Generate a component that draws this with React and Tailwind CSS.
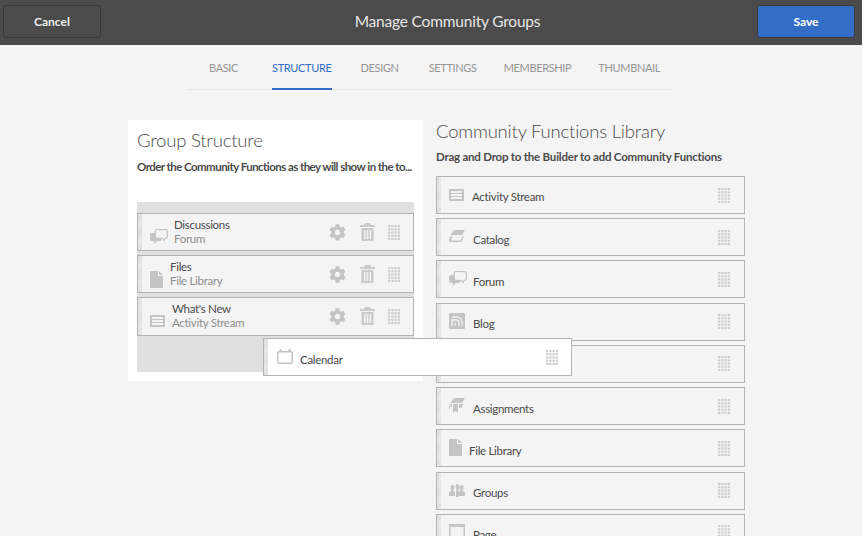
import { FaCog } from "react-icons/fa";

const ICON_COLOR = "#c4c4c4";

function Grip() {
  const dots = [];
  for (let r = 0; r < 5; r++) {
    for (let c = 0; c < 4; c++) {
      dots.push(<rect key={`${r}-${c}`} x={c * 3} y={r * 3} width="2" height="2" />);
    }
  }
  return (
    <svg width="12" height="15" viewBox="0 0 11 14" fill="#cbcbcb" className="shrink-0">
      {dots}
    </svg>
  );
}

function Trash() {
  return (
    <svg width="15" height="18" viewBox="0 0 15 18" fill="#cacaca" className="shrink-0">
      <path d="M5 0h5l1 2h4v2H0V2h4z" />
      <path fillRule="evenodd" d="M1.500 5h12v13h-12zM4 7v9h1.500V7zM6.800 7v9h1.500V7zM9.600 7v9h1.500V7z" />
    </svg>
  );
}

function ForumIcon() {
  return (
    <svg width="18" height="16" viewBox="0 0 18 16" className="shrink-0">
      <path d="M2 4h9v8H6.500L4 15.500V12H2a2 2 0 0 1-2-2V6a2 2 0 0 1 2-2z" fill={ICON_COLOR} />
      <path d="M7 .700h8.500A1.800 1.800 0 0 1 17.300 2.500v5a1.800 1.800 0 0 1-1.800 1.800H15l-1 2-2-2H7a1.800 1.800 0 0 1-1.800-1.800v-5A1.800 1.800 0 0 1 7 .700z" fill="#f4f4f4" stroke={ICON_COLOR} strokeWidth="1.300" />
    </svg>
  );
}

function FileIcon() {
  return (
    <svg width="13" height="17" viewBox="0 0 13 17" fill={ICON_COLOR} className="shrink-0">
      <path d="M0 0h8v5h5v12H0z" />
      <path d="M9 0l4 4H9z" />
    </svg>
  );
}

function StreamIcon() {
  return (
    <svg width="15" height="12" viewBox="0 0 15 12" className="shrink-0">
      <rect width="15" height="12" rx="1" fill={ICON_COLOR} />
      <rect x="2" y="2" width="11" height="2" fill="#f4f4f4" />
      <rect x="2" y="5" width="11" height="2" fill="#f4f4f4" />
      <rect x="2" y="8" width="11" height="2" fill="#f4f4f4" />
    </svg>
  );
}

function CatalogIcon() {
  return (
    <svg width="16" height="13" viewBox="0 0 16 13" fill={ICON_COLOR} className="shrink-0">
      <path d="M5 0h11l-3 5H1.500z" />
      <path d="M1 6.500h2.500L2.600 9.500c-.2.700.1 1 .8 1H11l2.500-4L15 6l-3 6H2c-1.500 0-2.200-1-1.800-2.300z" />
    </svg>
  );
}

function BlogIcon() {
  return (
    <svg width="16" height="16" viewBox="0 0 16 16" className="shrink-0">
      <rect width="16" height="16" rx="1" fill={ICON_COLOR} />
      <path d="M3 13V7h4a3 3 0 0 1 3 3v3M6 13v-3M3 4h5a5 5 0 0 1 5 5v4" fill="none" stroke="#f4f4f4" strokeWidth="1.300" />
    </svg>
  );
}

function AssignmentsIcon() {
  return (
    <svg width="16" height="16" viewBox="0 0 16 16" fill={ICON_COLOR} className="shrink-0">
      <path d="M5 0h11l-3 5H1.500z" />
      <path d="M1.500 6H3L2.500 9H1.200L1 11H0l.3-3zM4 6h5v9l-2.500-2L4 15z" />
      <path d="M10 6h3.500L15 5l-2.500 5H10z" />
    </svg>
  );
}

function GroupsIcon() {
  return (
    <svg width="16" height="13" viewBox="0 0 16 13" fill={ICON_COLOR} className="shrink-0">
      <path d="M3.500 1C5 1 5.800 2.200 5.500 4 5.300 5.300 4.800 6 4.500 6.800L6 8v4H0V8.500l2.500-1.700C2.200 6 1.700 5.300 1.500 4 1.200 2.200 2 1 3.500 1z" />
      <path d="M12.500 1c1.500 0 2.300 1.200 2 3-.2 1.300-.7 2-1 2.800L16 8.500V12h-6V8l1.500-1.200c-.3-.8-.8-1.500-1-2.800-.3-1.800.5-3 2-3z" />
      <path d="M8 0c1.700 0 2.500 1.300 2.200 3.200-.2 1.400-.7 2.200-1 3l.8.800v6H7V7l.8-.8c-.3-.8-.8-1.600-1-3C6.500 1.300 6.300 0 8 0z" />
    </svg>
  );
}

function PageIcon() {
  return (
    <svg width="16" height="16" viewBox="0 0 16 16" fill="none" className="shrink-0">
      <rect x=".750" y=".750" width="14.500" height="14.500" stroke={ICON_COLOR} strokeWidth="1.500" />
      <rect x="1" y="1" width="14" height="2" fill={ICON_COLOR} />
    </svg>
  );
}

function CalendarIcon() {
  return (
    <svg width="16" height="15" viewBox="0 0 16 15" fill="none" className="shrink-0">
      <rect x=".750" y="2.750" width="14.500" height="11.500" rx="1" stroke={ICON_COLOR} strokeWidth="1.500" />
      <rect x="2.500" y="0" width="2" height="3" fill={ICON_COLOR} />
      <rect x="11.500" y="0" width="2" height="3" fill={ICON_COLOR} />
    </svg>
  );
}

function Strip() {
  return <div className="w-[4px] shrink-0 self-stretch bg-[repeating-linear-gradient(135deg,#dedede_0,#dedede_1px,#ebebeb_1px,#ebebeb_2px)]" />;
}

const groupRows = [
  { title: "Discussions", sub: "Forum", icon: <ForumIcon />, gap: "ml-[6px]", height: "h-[38px]", pad: "" },
  { title: "Files", sub: "File Library", icon: <FileIcon />, gap: "ml-[7px]", height: "h-[38px]", pad: "" },
  { title: "What's New", sub: "Activity Stream", icon: <StreamIcon />, gap: "ml-[7px]", height: "h-[39px]", pad: "pb-[1px]" },
];

function GroupRow({ title, sub, icon, gap, height, pad }) {
  return (
    <div className={`${height} flex items-stretch border border-[#b3b3b3] bg-[#f4f4f4]`}>
      <Strip />
      <div className={`${pad} flex flex-1 items-center pl-[8px] pr-[13px]`}>
        <div className="mt-[10px]">{icon}</div>
        <div className={`${gap} flex-1 text-[11.500px] leading-[14px] tracking-[-0.3px]`}>
          <div className="text-[#4b4b4b]">{title}</div>
          <div className="text-[#8e8e8e]">{sub}</div>
        </div>
        <FaCog size={17} color={ICON_COLOR} className="shrink-0" />
        <div className="ml-[14px] mr-[13px]"><Trash /></div>
        <Grip />
      </div>
    </div>
  );
}

const libraryRows = [
  { label: "Activity Stream", icon: <StreamIcon />, gap: "ml-[8px]" },
  { label: "Catalog", icon: <CatalogIcon />, gap: "ml-[8px]" },
  { label: "Forum", icon: <ForumIcon />, gap: "ml-[6px]" },
  { label: "Blog", icon: <BlogIcon />, gap: "ml-[8px]" },
  { label: "", icon: null, gap: "" },
  { label: "Assignments", icon: <AssignmentsIcon />, gap: "ml-[8px]" },
  { label: "File Library", icon: <FileIcon />, gap: "ml-[7px]" },
  { label: "Groups", icon: <GroupsIcon />, gap: "ml-[8px]" },
  { label: "Page", icon: <PageIcon />, gap: "ml-[8px]" },
];

function LibraryRow({ label, icon, gap }) {
  return (
    <div className="flex h-[38px] shrink-0 items-stretch border border-[#b3b3b3] bg-[#f4f4f4]">
      <Strip />
      <div className="flex flex-1 items-center pl-[8px] pr-[14px]">
        <div className="-mt-[1px]">{icon}</div>
        <div className={`${gap} mt-[4px] flex-1 text-[11.500px] tracking-[-0.3px] text-[#4b4b4b]`}>{label}</div>
        <Grip />
      </div>
    </div>
  );
}

const tabs = [
  { label: "BASIC", cls: "ml-[22px] border-transparent text-[#969696]" },
  { label: "STRUCTURE", cls: "ml-[34px] border-[#326ec8] text-[#326ec8]" },
  { label: "DESIGN", cls: "ml-[29px] border-transparent text-[#969696]" },
  { label: "SETTINGS", cls: "ml-[30px] border-transparent text-[#969696]" },
  { label: "MEMBERSHIP", cls: "ml-[27px] border-transparent text-[#969696]" },
  { label: "THUMBNAIL", cls: "ml-[27px] border-transparent text-[#969696]" },
];

export default function App() {
  return (
    <div className="h-[536px] w-[865px] overflow-hidden bg-white font-['Lato','Noto_Sans',sans-serif]">
      <div className="h-full w-[862px] bg-[#f4f4f4]">
        <header className="flex h-[45px] items-center bg-[#4b4b4b] pb-[3px] pl-[3px] pr-[7px]">
          <button className="h-[33px] w-[98px] rounded-[3px] border border-[#3a3a3a] bg-[#4b4b4b] pt-[2px] text-[12px] font-bold text-[#f0f0f0]">Cancel</button>
          <h1 className="flex-1 pl-[37px] pt-[2px] text-center text-[15.500px] tracking-[-0.2px] text-[#e6e6e6]">Manage Community Groups</h1>
          <button className="h-[33px] w-[98px] rounded-[3px] border border-[#3a3a3a] bg-[#326ec8] pt-[2px] text-[12px] font-bold text-white">Save</button>
        </header>

        <nav className="ml-[187px] mt-[1px] flex h-[44px] w-[485px] border-b border-[#e6e6e6]">
          {tabs.map((t) => (
            <div key={t.label} className={`${t.cls} flex h-[44px] items-center border-b-2 pt-[2px] text-[11px] tracking-[-0.35px]`}>
              {t.label}
            </div>
          ))}
        </nav>

        <div className="flex pl-[128px]">
          <section className="relative mt-[30px] h-[261px] w-[295px] bg-white pl-[9px] pr-[9px] pt-[7px]">
            <h2 className="h-[26px] text-[18.500px] font-light leading-[26px] tracking-[-0.2px] text-[#4b4b4b]">Group Structure</h2>
            <p className="mt-[6px] whitespace-nowrap text-[11.500px] font-bold leading-[16px] tracking-[-0.55px] text-[#4b4b4b]">
              Order the Community Functions as they will show in the to...
            </p>
            <div className="mt-[27px] h-[170px] bg-[#e0e0e0] pt-[11px]">
              <div className="flex flex-col gap-[4px]">
                {groupRows.map((r) => (
                  <GroupRow key={r.title} {...r} />
                ))}
              </div>
            </div>
            <div className="absolute left-[135px] top-[218px] z-10 flex h-[38px] w-[309px] items-stretch border border-[#b3b3b3] bg-white">
              <Strip />
              <div className="flex flex-1 items-center pl-[9px] pr-[13px]">
                <div className="-mt-[1px]"><CalendarIcon /></div>
                <div className="ml-[7px] mt-[6px] flex-1 text-[11.500px] tracking-[-0.3px] text-[#4b4b4b]">Calendar</div>
                <div className="mt-[1px]"><Grip /></div>
              </div>
            </div>
          </section>

          <section className="ml-[13px] w-[309px] pt-[28px]">
            <h2 className="h-[26px] text-[18.500px] font-light leading-[26px] tracking-[-0.2px] text-[#4b4b4b]">Community Functions Library</h2>
            <p className="mt-[5px] text-[11.500px] font-bold leading-[16px] tracking-[-0.22px] text-[#4b4b4b]">
              Drag and Drop to the Builder to add Community Functions
            </p>
            <div className="mt-[11px] flex flex-col gap-[4.240px]">
              {libraryRows.map((r, i) => (
                <LibraryRow key={i} {...r} />
              ))}
            </div>
          </section>
        </div>
      </div>
    </div>
  );
}
